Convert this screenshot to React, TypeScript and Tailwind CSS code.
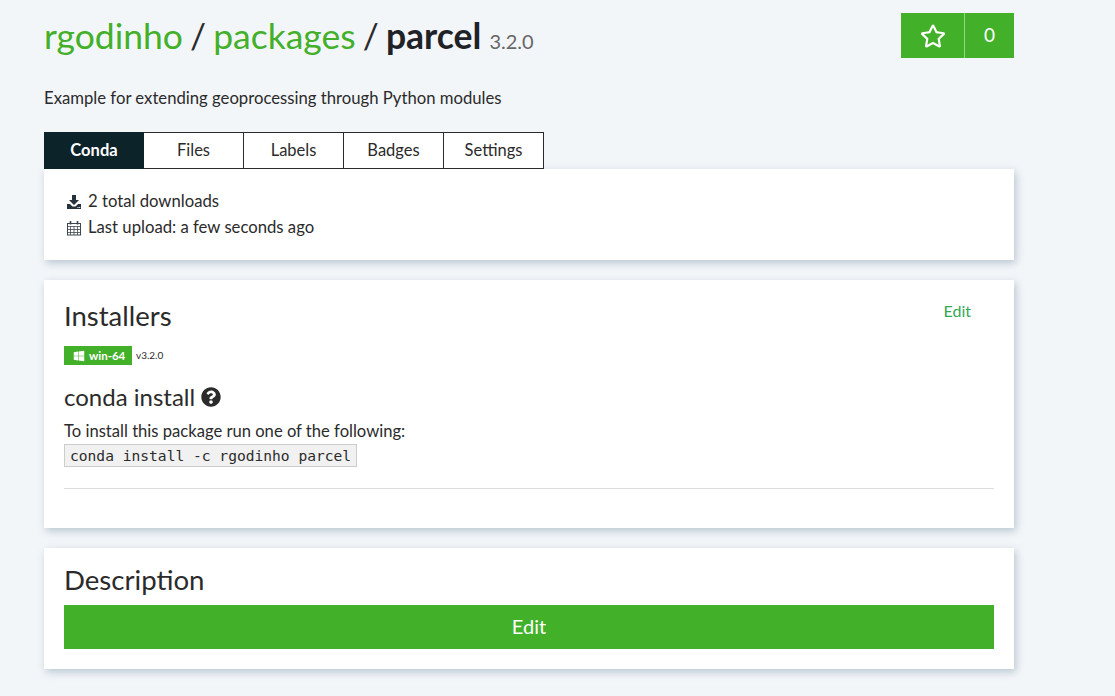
import { FaQuestionCircle, FaRegStar, FaWindows } from "react-icons/fa";

const tabs = ["Conda", "Files", "Labels", "Badges", "Settings"];
const cardClass = "bg-white shadow-[2px_3px_8px_rgba(110,140,160,0.45)]";

function DownloadIcon() {
  return (
    <svg viewBox="0 0 16 16" className="h-[16px] w-[16px] text-[#26323c]" fill="currentColor">
      <path d="M6 1h4v5h3l-5 5-5-5h3z" />
      <path d="M1 10h3l2.5 2.5h3L12 10h3v5H1z" />
      <rect x="11.5" y="13" width="1" height="1" fill="#fff" />
      <rect x="13.2" y="13" width="1" height="1" fill="#fff" />
    </svg>
  );
}

function CalendarIcon() {
  return (
    <svg viewBox="0 0 16 16" className="h-[16px] w-[16px] text-[#3d4650]" fill="none" stroke="currentColor" strokeWidth="1">
      <rect x="1.5" y="3.5" width="13" height="11.5" />
      <path d="M1.5 6.5h13M1.5 9.5h13M1.5 12.5h13M4.5 6.5V15M8 6.5V15M11.5 6.5V15" strokeWidth="0.8" />
      <path d="M4.5 1v3.5M11.5 1v3.5" strokeWidth="1.6" />
    </svg>
  );
}

export default function App() {
  return (
    <div className="min-h-[696px] overflow-hidden bg-[#f3f6f9] pl-[44px] font-['Lato','Noto_Sans',sans-serif] text-[#2b2b2b]">
      <div className="w-[970px]">
        <div className="flex h-[58px] items-start justify-between pt-[13px]">
          <h1 className="flex items-baseline whitespace-pre text-[35.5px] leading-[46px]">
            <span className="text-[#43b02a]">rgodinho</span>
            <span className="-mx-[2px]"> / </span>
            <span className="text-[#43b02a]">packages</span>
            <span className="-mx-[2px]"> / </span>
            <span className="font-bold text-[#1f2227]">parcel</span>
            <span className="ml-[8px] text-[20px] text-[#666]">3.2.0</span>
          </h1>
          <div className="flex h-[45px] w-[113px] bg-[#43b02a] text-white">
            <div className="flex w-[64px] items-center justify-center border-r border-[#9ad28c]">
              <FaRegStar className="h-[26px] w-[26px]" />
            </div>
            <div className="flex flex-1 items-center justify-center text-[19px]">0</div>
          </div>
        </div>

        <p className="mt-[29px] text-[16.7px] leading-[22px]">Example for extending geoprocessing through Python modules</p>

        <div className="mt-[23px] flex h-[37px]">
          {tabs.map((tab, i) => (
            <div
              key={tab}
              className={
                i === 0
                  ? "flex w-[100px] items-center justify-center bg-[#0c2329] text-[16.5px] font-bold text-white"
                  : "flex w-[100px] items-center justify-center border border-l-0 border-[#2b2b2b] bg-white text-[16.5px]"
              }
            >
              {tab}
            </div>
          ))}
        </div>

        <section className={`${cardClass} h-[91px] px-[22px] pt-[20px]`}>
          <div className="flex h-[26px] items-center gap-[6px] text-[16.7px]">
            <DownloadIcon />
            <span>2 total downloads</span>
          </div>
          <div className="flex h-[26px] items-center gap-[6px] text-[16.7px]">
            <CalendarIcon />
            <span>Last upload: a few seconds ago</span>
          </div>
        </section>

        <section className={`${cardClass} relative mt-[20px] h-[248px] px-[20px] pt-[20px]`}>
          <span className="absolute right-[43px] top-[21px] text-[16px] leading-[20px] text-[#34a853]">Edit</span>
          <h2 className="text-[27.5px] leading-[32px]">Installers</h2>
          <div className="mt-[14px] flex items-center gap-[4px]">
            <span className="flex h-[19px] w-[68px] items-center gap-[4px] bg-[#43b02a] pl-[9px] text-[11.5px] font-bold text-white">
              <FaWindows className="h-[12px] w-[12px]" />
              win-64
            </span>
            <span className="text-[10px]">v3.2.0</span>
          </div>
          <h3 className="mt-[18px] flex items-center gap-[6px] text-[24px] leading-[28px]">
            conda install
            <FaQuestionCircle className="h-[20px] w-[20px]" />
          </h3>
          <p className="mt-[10px] text-[16.6px] leading-[20px]">To install this package run one of the following:</p>
          <code className="mt-[3px] block w-fit border border-[#ccc] bg-[#f1f1f1] px-[5px] font-['DejaVu_Sans_Mono',monospace] text-[14.6px] leading-[21px]">
            conda install -c rgodinho parcel
          </code>
          <hr className="mt-[21px] border-[#ddd]" />
        </section>

        <section className={`${cardClass} mt-[20px] h-[121px] px-[20px] pt-[15px]`}>
          <h2 className="text-[27.6px] leading-[34px]">Description</h2>
          <div className="mt-[8px] flex h-[44px] items-center justify-center bg-[#43b02a] pb-[2px] text-[20px] text-white">Edit</div>
        </section>
      </div>
    </div>
  );
}
